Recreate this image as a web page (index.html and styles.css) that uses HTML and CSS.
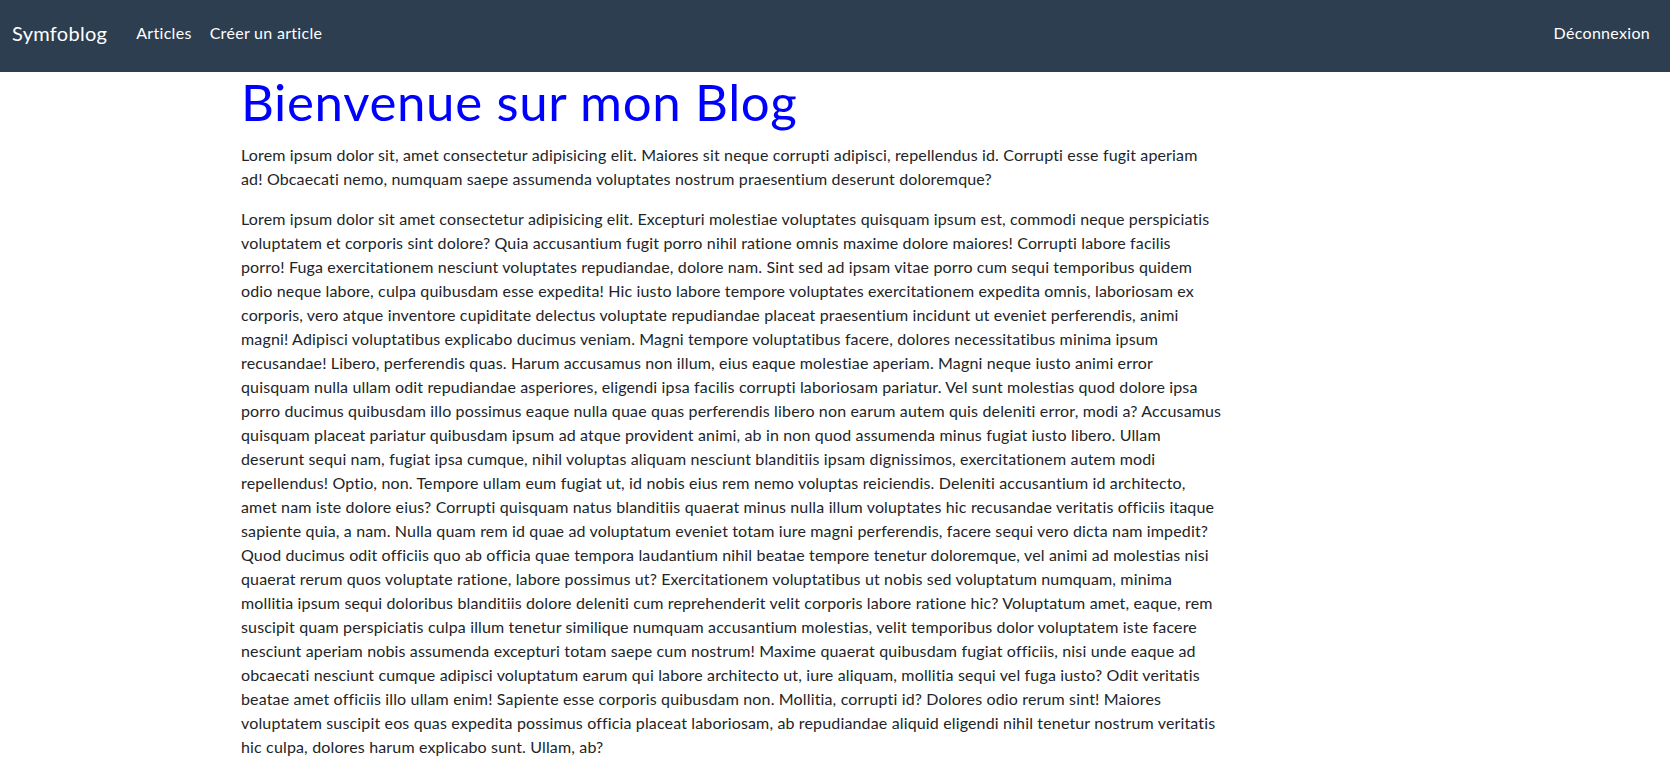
FILE: index.html
```html
<!DOCTYPE html>
<html lang="fr">
<head>
<meta charset="utf-8">
<title>Symfoblog</title>
<link rel="stylesheet" href="styles.css">
</head>
<body>
<nav class="navbar">
  <div class="nav-inner">
    <a class="brand" href="#">Symfoblog</a>
    <ul class="nav-links">
      <li><a href="#">Articles</a></li>
      <li><a href="#">Créer un article</a></li>
    </ul>
    <ul class="nav-links nav-right">
      <li><a href="#">Déconnexion</a></li>
    </ul>
  </div>
</nav>
<div class="page">
  <main class="content">
    <h1 class="title">Bienvenue sur mon Blog</h1>
    <p>Lorem ipsum dolor sit, amet consectetur adipisicing elit. Maiores sit neque corrupti adipisci, repellendus id. Corrupti esse fugit aperiam<br>
ad! Obcaecati nemo, numquam saepe assumenda voluptates nostrum praesentium deserunt doloremque?</p>
    <p>Lorem ipsum dolor sit amet consectetur adipisicing elit. Excepturi molestiae voluptates quisquam ipsum est, commodi neque perspiciatis<br>
voluptatem et corporis sint dolore? Quia accusantium fugit porro nihil ratione omnis maxime dolore maiores! Corrupti labore facilis<br>
porro! Fuga exercitationem nesciunt voluptates repudiandae, dolore nam. Sint sed ad ipsam vitae porro cum sequi temporibus quidem<br>
odio neque labore, culpa quibusdam esse expedita! Hic iusto labore tempore voluptates exercitationem expedita omnis, laboriosam ex<br>
corporis, vero atque inventore cupiditate delectus voluptate repudiandae placeat praesentium incidunt ut eveniet perferendis, animi<br>
magni! Adipisci voluptatibus explicabo ducimus veniam. Magni tempore voluptatibus facere, dolores necessitatibus minima ipsum<br>
recusandae! Libero, perferendis quas. Harum accusamus non illum, eius eaque molestiae aperiam. Magni neque iusto animi error<br>
quisquam nulla ullam odit repudiandae asperiores, eligendi ipsa facilis corrupti laboriosam pariatur. Vel sunt molestias quod dolore ipsa<br>
porro ducimus quibusdam illo possimus eaque nulla quae quas perferendis libero non earum autem quis deleniti error, modi a? Accusamus<br>
quisquam placeat pariatur quibusdam ipsum ad atque provident animi, ab in non quod assumenda minus fugiat iusto libero. Ullam<br>
deserunt sequi nam, fugiat ipsa cumque, nihil voluptas aliquam nesciunt blanditiis ipsam dignissimos, exercitationem autem modi<br>
repellendus! Optio, non. Tempore ullam eum fugiat ut, id nobis eius rem nemo voluptas reiciendis. Deleniti accusantium id architecto,<br>
amet nam iste dolore eius? Corrupti quisquam natus blanditiis quaerat minus nulla illum voluptates hic recusandae veritatis officiis itaque<br>
sapiente quia, a nam. Nulla quam rem id quae ad voluptatum eveniet totam iure magni perferendis, facere sequi vero dicta nam impedit?<br>
Quod ducimus odit officiis quo ab officia quae tempora laudantium nihil beatae tempore tenetur doloremque, vel animi ad molestias nisi<br>
quaerat rerum quos voluptate ratione, labore possimus ut? Exercitationem voluptatibus ut nobis sed voluptatum numquam, minima<br>
mollitia ipsum sequi doloribus blanditiis dolore deleniti cum reprehenderit velit corporis labore ratione hic? Voluptatum amet, eaque, rem<br>
suscipit quam perspiciatis culpa illum tenetur similique numquam accusantium molestias, velit temporibus dolor voluptatem iste facere<br>
nesciunt aperiam nobis assumenda excepturi totam saepe cum nostrum! Maxime quaerat quibusdam fugiat officiis, nisi unde eaque ad<br>
obcaecati nesciunt cumque adipisci voluptatum earum qui labore architecto ut, iure aliquam, mollitia sequi vel fuga iusto? Odit veritatis<br>
beatae amet officiis illo ullam enim! Sapiente esse corporis quibusdam non. Mollitia, corrupti id? Dolores odio rerum sint! Maiores<br>
voluptatem suscipit eos quas expedita possimus officia placeat laboriosam, ab repudiandae aliquid eligendi nihil tenetur nostrum veritatis<br>
hic culpa, dolores harum explicabo sunt. Ullam, ab?</p>
  </main>
</div>
</body>
</html>
```

FILE: styles.css
```css
* { box-sizing: border-box; }
html, body { margin: 0; padding: 0; }
body {
  font-family: Lato, "Liberation Sans", sans-serif;
  font-size: 16px;
  line-height: 1.5;
  color: #212529;
  background: #fff;
}
a { text-decoration: none; }
.navbar {
  background: #2c3e50;
  padding: 13px 0 19px;
}
.nav-inner {
  display: flex;
  align-items: center;
  padding: 0 11px 0 12px;
}
.brand {
  color: #fff;
  font-size: 20px;
  letter-spacing: 0.3px;
  line-height: 30px;
  padding: 5px 0;
  margin-right: 20px;
}
.nav-links {
  display: flex;
  list-style: none;
  margin: 0;
  padding: 0;
}
.nav-links a {
  display: block;
  color: #fff;
  letter-spacing: 0.3px;
  padding: 8px 9px;
  line-height: 24px;
}
.nav-right { margin-left: auto; }
.page {
  max-width: 1188px;
  margin: 0 auto;
}
.content {
  width: 1010px;
}
.title {
  color: #0000ff;
  font-weight: 400;
  font-size: 51px;
  letter-spacing: 0.65px;
  line-height: 60px;
  margin: 0 0 11px;
}
.content p {
  margin: 0 0 16px;
  letter-spacing: 0.15px;
}
```
